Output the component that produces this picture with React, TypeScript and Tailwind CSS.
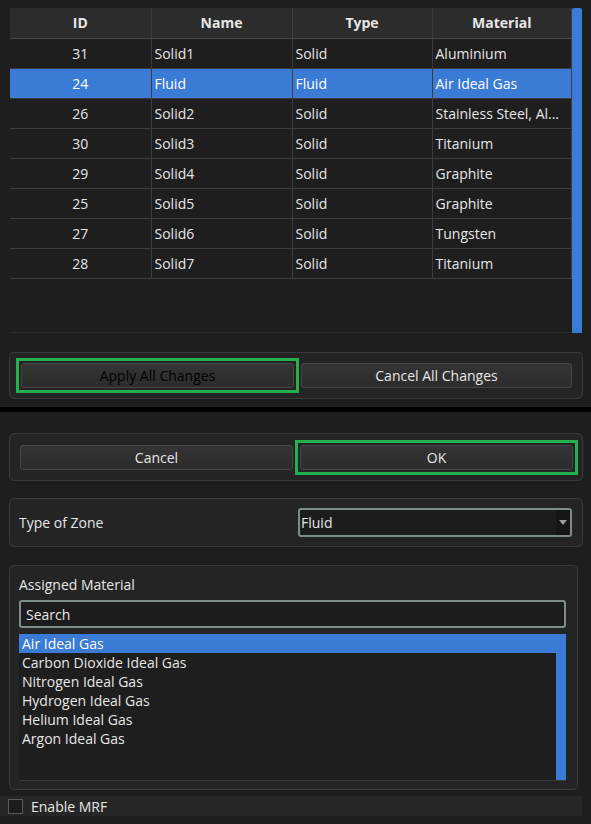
import type { ReactNode } from "react";

type Zone = { id: number; name: string; type: string; material: string };

const zones: Zone[] = [
  { id: 31, name: "Solid1", type: "Solid", material: "Aluminium" },
  { id: 24, name: "Fluid", type: "Fluid", material: "Air Ideal Gas" },
  { id: 26, name: "Solid2", type: "Solid", material: "Stainless Steel, Al..." },
  { id: 30, name: "Solid3", type: "Solid", material: "Titanium" },
  { id: 29, name: "Solid4", type: "Solid", material: "Graphite" },
  { id: 25, name: "Solid5", type: "Solid", material: "Graphite" },
  { id: 27, name: "Solid6", type: "Solid", material: "Tungsten" },
  { id: 28, name: "Solid7", type: "Solid", material: "Titanium" },
];

const materials = [
  "Air Ideal Gas",
  "Carbon Dioxide Ideal Gas",
  "Nitrogen Ideal Gas",
  "Hydrogen Ideal Gas",
  "Helium Ideal Gas",
  "Argon Ideal Gas",
];

const Panel = ({ children, className = "" }: { children: ReactNode; className?: string }) => (
  <div className={`ml-[9px] rounded-[5px] border border-[#3a3a3a] bg-[#242424] ${className}`}>
    {children}
  </div>
);

const Btn = ({ label, dim = false }: { label: string; dim?: boolean }) => (
  <button
    className={`h-[25px] w-full rounded-[3px] border border-[#474747] bg-gradient-to-b from-[#343434] to-[#2c2c2c] text-[14px] ${
      dim ? "text-black" : "text-[#e6e6e6]"
    }`}
  >
    {label}
  </button>
);

const Highlight = ({ children }: { children: ReactNode }) => (
  <div className="border-[3px] border-[#22b14c] p-[2px]">{children}</div>
);

export default function App() {
  const cell = "border-r border-b border-[#3c3c3c] px-[3px] h-[30px]";
  return (
    <div
      className="w-[591px] h-[824px] bg-[#1e1e1e] text-[#e6e6e6] text-[14px] overflow-hidden"
      style={{ fontFamily: '"Open Sans", "Noto Sans", sans-serif' }}
    >
      {/* zone table */}
      <div className="pt-[8px] flex pl-[10px]">
        <div className="w-[562px] h-[325px] bg-[#1e1e1e] border-b border-[#2c2c2c]">
          <table className="w-full border-collapse table-fixed">
            <thead>
              <tr className="bg-[#2c2c2c] font-bold">
                <th className={`${cell} w-[141px] border-b-[#474747]`}>ID</th>
                <th className={`${cell} w-[141px] border-b-[#474747]`}>Name</th>
                <th className={`${cell} w-[140px] border-b-[#474747]`}>Type</th>
                <th className={`${cell} border-b-[#474747]`}>Material</th>
              </tr>
            </thead>
            <tbody>
              {zones.map((z) => (
                <tr key={z.id} className={z.id === 24 ? "bg-[#3a7bd5] text-white" : ""}>
                  <td className={`${cell} text-center`}>{z.id}</td>
                  <td className={cell}>{z.name}</td>
                  <td className={cell}>{z.type}</td>
                  <td className={`${cell} whitespace-nowrap overflow-hidden`}>{z.material}</td>
                </tr>
              ))}
            </tbody>
          </table>
        </div>
        <div className="w-[10px] h-[325px] bg-[#3a7bd5] rounded-t-[2px]" />
      </div>

      <Panel className="mt-[19px] w-[574px] h-[47px] flex items-center gap-[2px] pl-[6px] pr-[10px]">
        <div className="w-[283px]">
          <Highlight>
            <Btn label="Apply All Changes" dim />
          </Highlight>
        </div>
        <div className="flex-1">
          <Btn label="Cancel All Changes" />
        </div>
      </Panel>

      <div className="mt-[8px] h-[5px] bg-black" />

      <Panel className="mt-[21px] w-[574px] h-[48px] flex items-center gap-[2px] pl-[10px] pr-[4px]">
        <div className="w-[273px]">
          <Btn label="Cancel" />
        </div>
        <div className="flex-1">
          <Highlight>
            <Btn label="OK" />
          </Highlight>
        </div>
      </Panel>

      <Panel className="mt-[17px] w-[574px] h-[49px] flex items-center pl-[9px] pr-[10px]">
        <span className="flex-1">Type of Zone</span>
        <div className="w-[274px] h-[29px] rounded-[3px] border-2 border-[#7f8c8c] bg-[#1c1c1c] flex items-center">
          <span className="flex-1 pl-[1px]">Fluid</span>
          <div className="w-[14px] h-full bg-[#161616] flex items-center justify-center">
            <svg width="8" height="5" viewBox="0 0 8 5">
              <path d="M0 0 L8 0 L4 5 Z" fill="#9a9a9a" />
            </svg>
          </div>
        </div>
      </Panel>

      <Panel className="mt-[18px] w-[569px] h-[225px] pl-[9px] pr-[11px]">
        <div className="pt-[8px] h-[33px]">Assigned Material</div>
        <div className="mt-[1px] h-[28px] rounded-[3px] border-2 border-[#7f8c8c] bg-[#1c1c1c] flex items-center pl-[5px]">
          Search
        </div>
        <div className="mt-[6px] h-[147px] flex bg-[#1e1e1e] border-b border-[#3a3a3a]">
          <div className="flex-1">
            {materials.map((m, i) => (
              <div
                key={m}
                className={`h-[19px] leading-[19px] pl-[3px] ${i === 0 ? "bg-[#3a7bd5] text-white" : ""}`}
              >
                {m}
              </div>
            ))}
          </div>
          <div className="w-[10px] bg-[#3a7bd5]" />
        </div>
      </Panel>

      <div className="mt-[6px] w-[582px] h-[20px] bg-[#262626] flex items-center pl-[8px] gap-[8px]">
        <div className="w-[15px] h-[15px] border border-[#5a5a5a] bg-[#1c1c1c]" />
        <span>Enable MRF</span>
      </div>
    </div>
  );
}
